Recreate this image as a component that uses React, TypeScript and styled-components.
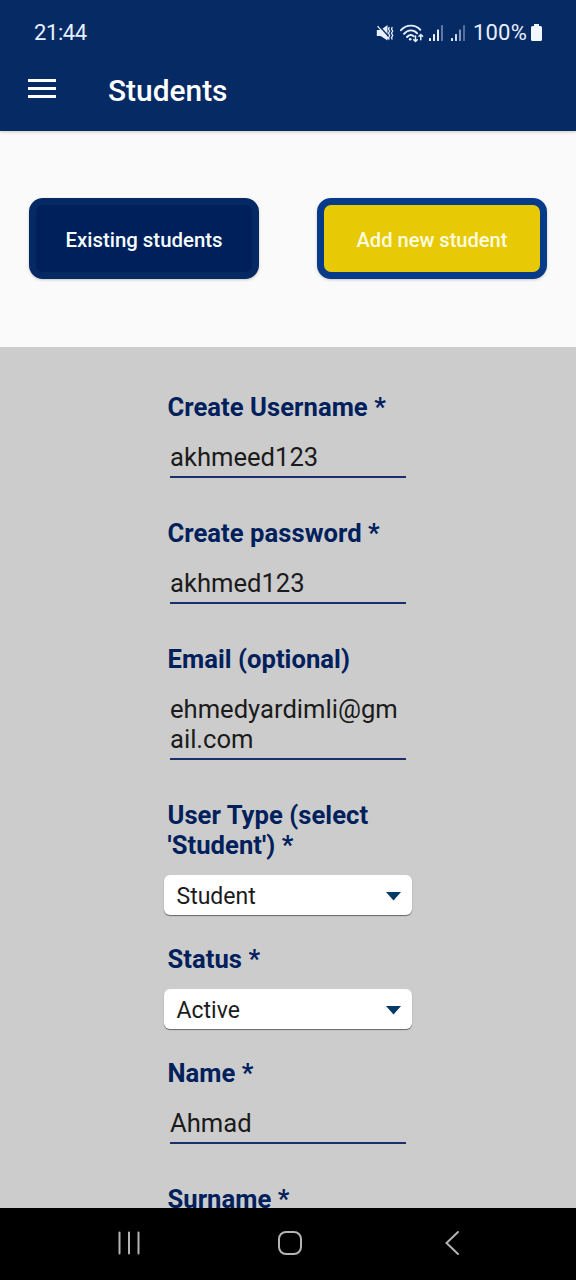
import React from "react";
import styled, { createGlobalStyle } from "styled-components";

const GlobalStyle = createGlobalStyle`
  * { box-sizing: border-box; }
  body {
    margin: 0;
    background: #cccccc;
    font-family: Roboto, "Liberation Sans", sans-serif;
  }
`;

const Screen = styled.div`
  display: flex;
  flex-direction: column;
  width: 576px;
  height: 1280px;
  overflow: hidden;
  background: #cccccc;
`;

const Header = styled.header`
  flex: none;
  height: 131px;
  background: #062a64;
  color: #ffffff;
  z-index: 1;
  box-shadow: 0 1px 3px rgba(60, 30, 20, 0.22);
`;

const StatusBar = styled.div`
  display: flex;
  align-items: center;
  justify-content: space-between;
  height: 50px;
  padding: 16px 33px 0 34px;
  color: #e6f0ff;
`;

const Clock = styled.span`
  font-size: 22px;
  line-height: 34px;
  letter-spacing: -0.4px;
`;

const StatusIcons = styled.div`
  display: flex;
  align-items: center;
`;

const BatteryText = styled.span`
  font-size: 22px;
  line-height: 34px;
  letter-spacing: 0.2px;
`;

const AppBar = styled.div`
  display: flex;
  align-items: center;
  height: 81px;
  padding: 0 28px;
  gap: 52px;
`;

const MenuButton = styled.button`
  display: flex;
  flex-direction: column;
  gap: 5px;
  width: 28px;
  padding: 0;
  margin-top: -4px;
  border: 0;
  background: none;
`;

const MenuLine = styled.span`
  height: 3px;
  background: #ffffff;
`;

const Title = styled.h1`
  margin: 0;
  font-size: 29.9px;
  font-weight: 500;
  line-height: 36px;
`;

const Actions = styled.div`
  flex: none;
  display: flex;
  justify-content: space-between;
  height: 216px;
  padding: 67px 29px 0;
  background: #fafafa;
`;

const ActionButton = styled.button<{ $fill: string; $edge: string; $text: string; $size: number }>`
  width: 230px;
  height: 81px;
  padding: 2px 0 0;
  border: 7px solid ${(p) => p.$edge};
  border-radius: 14px;
  background: ${(p) => p.$fill};
  color: ${(p) => p.$text};
  font: 500 ${(p) => p.$size}px/24px Roboto, sans-serif;
  box-shadow: 0 1px 3px rgba(0, 0, 0, 0.2);
`;

const Form = styled.form`
  flex: 1;
  min-height: 0;
  overflow: hidden;
  display: flex;
  flex-direction: column;
  padding: 45px 164px 0;
`;

const Label = styled.label`
  padding-left: 3.5px;
  font-size: 25.6px;
  font-weight: 700;
  line-height: 30px;
  letter-spacing: 0.05px;
  color: #00205c;
`;

const Field = styled.div`
  display: flex;
  flex-direction: column;
  margin-bottom: 40px;
`;

const Value = styled.div`
  width: 236px;
  margin: 20px 0 0 6px;
  padding-bottom: 4px;
  border-bottom: 2px solid #1a2f6c;
  font-size: 25.6px;
  line-height: 30px;
  color: #1b1b1b;
  word-break: break-all;
`;

const SelectField = styled.div`
  display: flex;
  flex-direction: column;
  margin-bottom: 29px;
`;

const SelectBox = styled.div`
  display: flex;
  align-items: center;
  justify-content: space-between;
  height: 40px;
  margin-top: 15px;
  padding: 2px 11px 0 12.5px;
  border-radius: 6px;
  background: #ffffff;
  box-shadow: 0 1px 1px rgba(0, 0, 0, 0.5);
  font-size: 23px;
  line-height: 28px;
  color: #1b1b1b;
`;

const SelectValue = styled.span`
  padding-top: 2px;
`;

const NavBar = styled.nav`
  flex: none;
  display: flex;
  align-items: center;
  justify-content: space-between;
  height: 72px;
  padding: 0 113px 2px 117px;
  background: #000000;
`;

const MuteIcon = () => (
  <svg width="18" height="18" viewBox="0 0 18 18" fill="none">
    <path d="M.8 6h3.800L11.500 1v15.500L4.600 12H.8z" fill="#e6f0ff" />
    <path d="M3 1.800 13 12.800" stroke="#062a64" strokeWidth="1.400" />
    <path d="M1.600 2.200 12.600 15" stroke="#e6f0ff" strokeWidth="1.300" />
    <path d="m13.300 3-.8 2 1.200 2-1.200 2.300 1.200 2.200-1.200 2.200.8 1.800M16.300 3l-.8 2 1.200 2-1.200 2.300 1.200 2.200-1.200 2.200.8 1.800" stroke="#e6f0ff" strokeWidth="1.300" />
  </svg>
);

const WifiIcon = () => (
  <svg width="24" height="19" viewBox="0 0 24 19" fill="none" stroke="#e6f0ff" strokeLinecap="round">
    <path d="M1 6.200C6.300 .200 15.700 .200 20.300 5.800M4 9.800c4-4.500 9.700-4.500 13.200-.5M7 13c2.200-2.500 5-2.500 6.800-.7" strokeWidth="1.900" />
    <circle cx="10.200" cy="15.200" r="1.300" fill="#e6f0ff" stroke="none" />
    <path d="M15.500 12v5.500m-1.800-1.800 1.800 1.800 1.800-1.800M20.800 15.800v-5.300m-1.800 1.800 1.800-1.800 1.800 1.800" strokeWidth="1.500" />
  </svg>
);

const BAR_HEIGHTS = [3, 7, 11.5, 16];

const SignalIcon = ({ levels }: { levels: number[] }) => (
  <svg width="15" height="17" viewBox="0 0 15 17" fill="#e6f0ff">
    {BAR_HEIGHTS.map((h, i) => (
      <rect key={h} x={i * 4} y={16 - h} width="2" height={h} rx=".5" opacity={levels[i]} />
    ))}
  </svg>
);

const BatteryIcon = () => (
  <svg width="13" height="18" viewBox="0 0 13 18" fill="#f2f6ff">
    <path d="M4 0h5v2h1.500a1.500 1.500 0 0 1 1.500 1.500v12A1.500 1.500 0 0 1 10.500 17h-8A1.500 1.500 0 0 1 1 15.500v-12A1.500 1.500 0 0 1 2.500 2H4z" />
  </svg>
);

const Gap = styled.span<{ $w: number }>`
  width: ${(p) => p.$w}px;
`;

const Caret = () => (
  <svg width="15" height="9" viewBox="0 0 15 9">
    <path d="M0 0h15l-7.500 8.500z" fill="#043a66" />
  </svg>
);

const TextField = ({ label, value }: { label: string; value: string }) => (
  <Field>
    <Label>{label}</Label>
    <Value>{value}</Value>
  </Field>
);

const Select = ({ label, value }: { label: string; value: string }) => (
  <SelectField>
    <Label>{label}</Label>
    <SelectBox>
      <SelectValue>{value}</SelectValue>
      <Caret />
    </SelectBox>
  </SelectField>
);

export default function App() {
  return (
    <Screen>
      <GlobalStyle />
      <Header>
        <StatusBar>
          <Clock>21:44</Clock>
          <StatusIcons>
            <MuteIcon />
            <Gap $w={6} />
            <WifiIcon />
            <Gap $w={5} />
            <SignalIcon levels={[1, 1, 1, 0.4]} />
            <Gap $w={7} />
            <SignalIcon levels={[1, 0.9, 0.55, 0.35]} />
            <Gap $w={7} />
            <BatteryText>100%</BatteryText>
            <Gap $w={3} />
            <BatteryIcon />
          </StatusIcons>
        </StatusBar>
        <AppBar>
          <MenuButton aria-label="Menu">
            <MenuLine />
            <MenuLine />
            <MenuLine />
          </MenuButton>
          <Title>Students</Title>
        </AppBar>
      </Header>
      <Actions>
        <ActionButton $fill="#00205b" $edge="#052962" $text="#f6ffff" $size={20.4}>
          Existing students
        </ActionButton>
        <ActionButton $fill="#e7c905" $edge="#083a8a" $text="#fffde0" $size={20.1}>
          Add new student
        </ActionButton>
      </Actions>
      <Form>
        <TextField label="Create Username *" value="akhmeed123" />
        <TextField label="Create password *" value="akhmed123" />
        <TextField label="Email (optional)" value="ehmedyardimli@gmail.com" />
        <Select label="User Type (select 'Student') *" value="Student" />
        <Select label="Status *" value="Active" />
        <TextField label="Name *" value="Ahmad" />
        <TextField label="Surname *" value="" />
      </Form>
      <NavBar>
        <svg width="24" height="26" viewBox="0 0 24 26" stroke="#b4b4b4" strokeWidth="2" strokeLinecap="round">
          <path d="M2.500 2.500v21M12 2.500v21M21.500 2.500v21" />
        </svg>
        <svg width="30" height="26" viewBox="0 0 30 26" fill="none" stroke="#b4b4b4" strokeWidth="2">
          <rect x="1" y="2" width="22" height="22" rx="7" />
        </svg>
        <svg width="18" height="26" viewBox="0 0 18 26" fill="none" stroke="#b4b4b4" strokeWidth="2" strokeLinecap="round">
          <path d="M13 2 1.500 13 13 24" />
        </svg>
      </NavBar>
    </Screen>
  );
}
